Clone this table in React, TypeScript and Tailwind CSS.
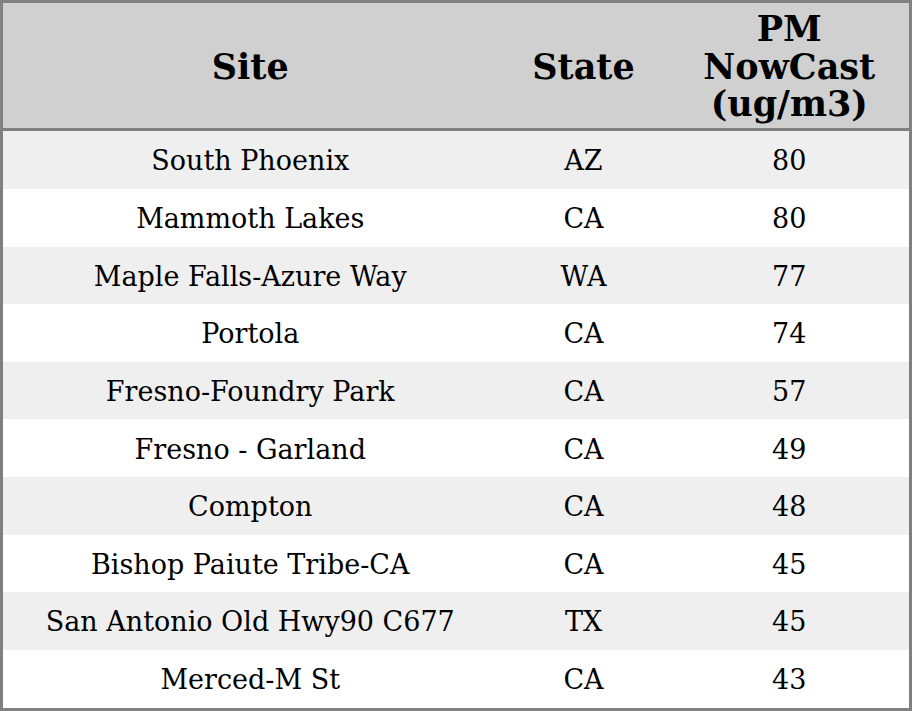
const rows: [string, string, number][] = [
  ['South Phoenix', 'AZ', 80],
  ['Mammoth Lakes', 'CA', 80],
  ['Maple Falls-Azure Way', 'WA', 77],
  ['Portola', 'CA', 74],
  ['Fresno-Foundry Park', 'CA', 57],
  ['Fresno - Garland', 'CA', 49],
  ['Compton', 'CA', 48],
  ['Bishop Paiute Tribe-CA', 'CA', 45],
  ['San Antonio Old Hwy90 C677', 'TX', 45],
  ['Merced-M St', 'CA', 43],
];

export default function App() {
  return (
    <div className="w-[912px] h-[711px] bg-white font-['DejaVu_Serif',serif] text-black">
      <table className="w-full h-full border-[3px] border-[#808080] border-collapse table-fixed">
        <colgroup>
          <col className="w-[496px]" />
          <col className="w-[172px]" />
          <col />
        </colgroup>
        <thead>
          <tr className="bg-[#d0d0d0] h-[128px] border-b-[3px] border-[#808080]">
            <th className="text-[35px] font-bold leading-[37.5px] pt-[2px]">Site</th>
            <th className="text-[35px] font-bold leading-[37.5px] pt-[2px]">State</th>
            <th className="text-[35px] font-bold leading-[37.5px] pt-[2px]">
              PM
              <br />
              NowCast
              <br />
              (ug/m3)
            </th>
          </tr>
        </thead>
        <tbody>
          {rows.map(([site, state, value], i) => (
            <tr key={site} className={i % 2 === 0 ? 'bg-[#efefef]' : 'bg-white'}>
              <td className="text-center text-[27px] pt-[3px]">{site}</td>
              <td className="text-center text-[27px] pt-[3px]">{state}</td>
              <td className="text-center text-[27px] pt-[3px]">{value}</td>
            </tr>
          ))}
        </tbody>
      </table>
    </div>
  );
}
